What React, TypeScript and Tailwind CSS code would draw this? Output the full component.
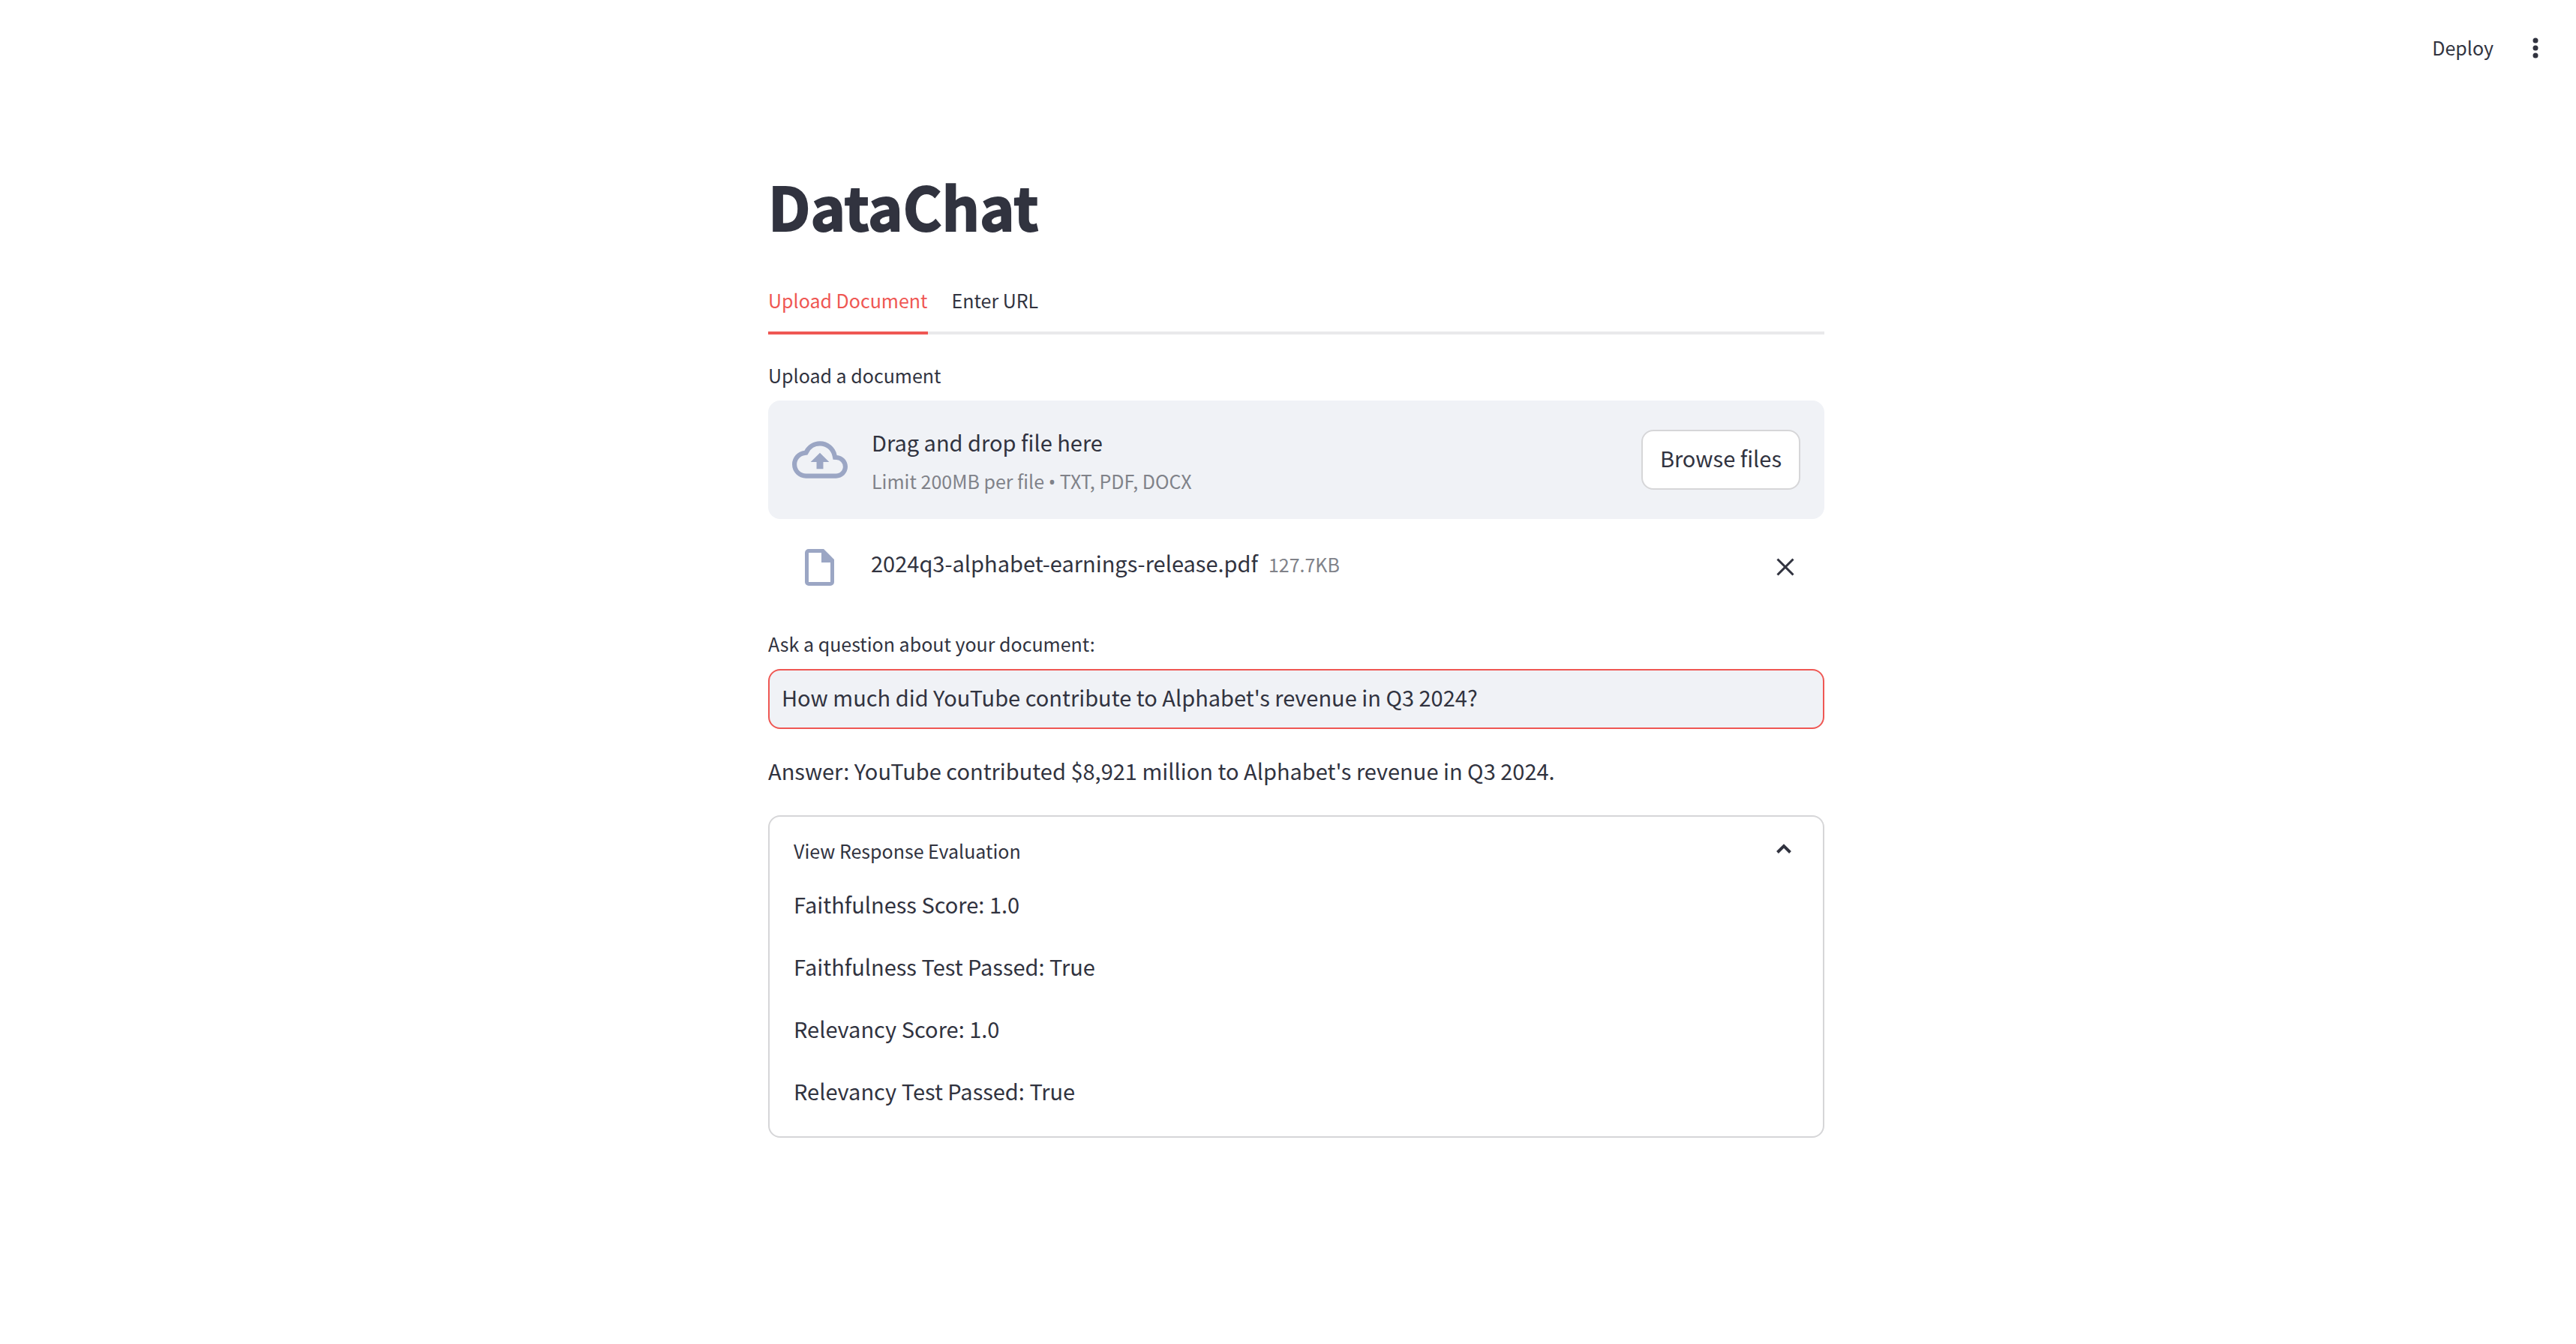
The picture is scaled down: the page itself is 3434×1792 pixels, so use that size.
import { useState } from "react";

const scores = [
  "Faithfulness Score: 1.0",
  "Faithfulness Test Passed: True",
  "Relevancy Score: 1.0",
  "Relevancy Test Passed: True",
];

function CloudUploadIcon() {
  return (
    <svg className="size-[74px] shrink-0" viewBox="0 0 24 24" fill="#9ba6c4" aria-hidden="true">
      <path d="M19.35 10.04A7.49 7.49 0 0012 4C9.11 4 6.6 5.64 5.35 8.04A5.994 5.994 0 000 14c0 3.31 2.69 6 6 6h13c2.76 0 5-2.24 5-5 0-2.64-2.05-4.78-4.65-4.96zM19 18H6c-2.21 0-4-1.79-4-4 0-2.05 1.53-3.76 3.56-3.97l1.07-.11.5-.95A5.469 5.469 0 0112 6c2.62 0 4.88 1.86 5.39 4.43l.3 1.5 1.53.11A2.98 2.98 0 0122 15c0 1.65-1.35 3-3 3zM8 13h2.55v3h2.9v-3H16l-4-4-4 4z" />
    </svg>
  );
}

function FileIcon() {
  return (
    <svg className="h-[49px] w-[39px] shrink-0" viewBox="0 0 39 49" aria-hidden="true">
      <path
        d="M5 2.5H24L36.500 15V44a2.500 2.500 0 0 1-2.500 2.500H5A2.500 2.500 0 0 1 2.500 44V5A2.500 2.500 0 0 1 5 2.500Z"
        fill="none"
        stroke="#9ba6c4"
        strokeWidth="5"
      />
      <path d="M22 1h3l13 14v3H22Z" fill="#9ba6c4" />
    </svg>
  );
}

export default function App() {
  const [question, setQuestion] = useState(
    "How much did YouTube contribute to Alphabet's revenue in Q3 2024?",
  );
  const [open, setOpen] = useState(true);
  const [tab, setTab] = useState("upload");

  return (
    <div className="min-h-screen bg-white font-['Noto_Sans_CJK_SC','Noto_Sans',sans-serif] text-[29px] leading-12 text-[#31333f]">
      <header className="flex h-32 items-center justify-end gap-[38px] pr-9">
        <button type="button" className="pb-0.5 text-[25px] leading-10">
          Deploy
        </button>
        <button type="button" aria-label="Menu" className="flex w-9 justify-center">
          <svg className="h-7 w-2" viewBox="0 0 8 28" fill="#31333f" aria-hidden="true">
            <circle cx="4" cy="4" r="3.500" />
            <circle cx="4" cy="14" r="3.500" />
            <circle cx="4" cy="24" r="3.500" />
          </svg>
        </button>
      </header>

      <main className="pt-[93px] pl-[22px]">
        <div className="mx-auto max-w-[1408px]">
          <h1 className="text-[79px] leading-[106px] font-bold [-webkit-text-stroke:2px_#31333f]">DataChat</h1>

          <div role="tablist" className="mt-[53px] flex gap-8 text-[25px] leading-10 shadow-[inset_0_-4px_0_#e9e9eb]">
            <button
              type="button"
              role="tab"
              aria-selected={tab === "upload"}
              onClick={() => setTab("upload")}
              className="border-b-4 border-[#ef5753] pb-[22px] text-[#ef5753]"
            >
              Upload Document
            </button>
            <button
              type="button"
              role="tab"
              aria-selected={tab === "url"}
              onClick={() => setTab("url")}
              className="border-b-4 border-transparent pb-[22px]"
            >
              Enter URL
            </button>
          </div>

          <section>
            <h2 className="mt-[34px] text-[25px] leading-10">Upload a document</h2>
            <div className="mt-3.5 flex items-center gap-8 rounded-2xl bg-[#f0f2f6] px-8 py-[31px]">
              <CloudUploadIcon />
              <div className="flex flex-1 flex-col gap-2">
                <p>Drag and drop file here</p>
                <p className="text-[25px] leading-10 text-[#808289]">
                  Limit 200MB per file <span className="font-['Noto_Sans',sans-serif] leading-none">•</span> TXT, PDF, DOCX
                </p>
              </div>
              <button
                type="button"
                className="h-20 rounded-2xl border-2 border-[#d6d6d8] bg-white px-[23px] pb-1.5"
              >
                Browse files
              </button>
            </div>

            <div className="mt-8 flex h-16 items-center pr-10 pl-[49px]">
              <FileIcon />
              <div className="ml-[49px] flex flex-1 items-baseline gap-3.5 pb-3">
                <span>2024q3-alphabet-earnings-release.pdf</span>
                <span className="text-[25px] leading-10 text-[#808289]">127.7KB</span>
              </div>
              <button type="button" aria-label="Remove file">
                <svg className="size-6" viewBox="0 0 24 24" fill="none" stroke="#31333f" strokeWidth="3" aria-hidden="true">
                  <path d="M1.500 1.500 22.500 22.500M22.500 1.500 1.500 22.500" />
                </svg>
              </button>
            </div>
          </section>

          <label htmlFor="question" className="mt-[50px] block text-[25px] leading-10">
            Ask a question about your document:
          </label>
          <input
            id="question"
            type="text"
            value={question}
            onChange={(event) => setQuestion(event.target.value)}
            className="mt-3.5 block h-20 w-full rounded-2xl border-2 border-[#ef5753] bg-[#f0f2f6] px-4 pb-1.5 outline-none"
          />

          <p className="mt-[31px]">
            Answer: YouTube contributed $8,921 million to Alphabet's revenue in Q3 2024.
          </p>

          <section className="mt-9 rounded-2xl border-2 border-[#d6d6d8] px-8 pt-[25px] pb-[37px]">
            <button
              type="button"
              aria-expanded={open}
              onClick={() => setOpen(!open)}
              className="flex w-full items-center justify-between pr-2.5 text-[25px] leading-10"
            >
              View Response Evaluation
              <svg className="mb-1 h-3.5 w-5" viewBox="0 0 20 14" fill="none" stroke="#31333f" strokeWidth="4" aria-hidden="true">
                <path d="M1.500 11.500 10 3 18.500 11.500" />
              </svg>
            </button>
            {open && (
              <div className="mt-[27px] flex flex-col gap-[35px]">
                {scores.map((line) => (
                  <p key={line}>{line}</p>
                ))}
              </div>
            )}
          </section>
        </div>
      </main>
    </div>
  );
}
